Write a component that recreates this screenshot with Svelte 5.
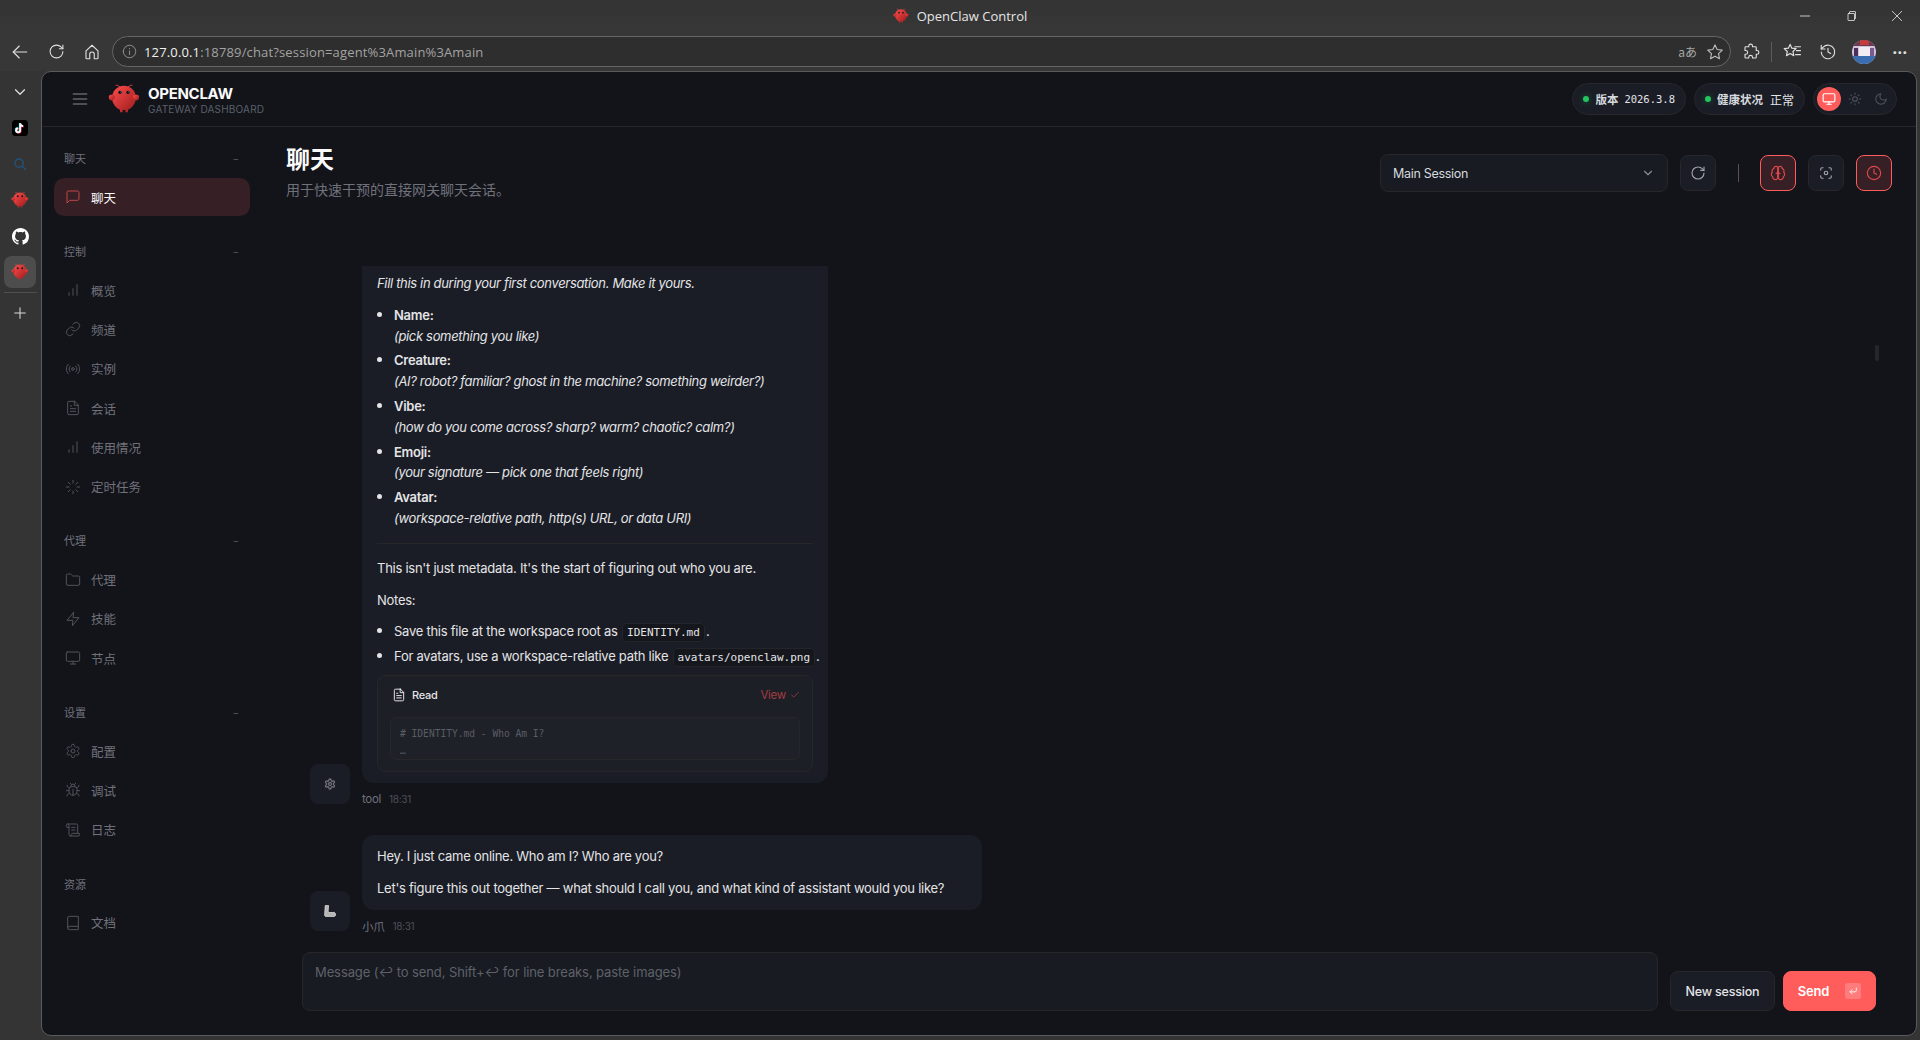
<script>
  const circle = (cx, cy, r) => `M${cx - r} ${cy}a${r} ${r} 0 1 0 ${r * 2} 0a${r} ${r} 0 1 0 ${-r * 2} 0`;

  const icons = {
    message: ['M21 15a2 2 0 0 1-2 2H7l-4 4V5a2 2 0 0 1 2-2h14a2 2 0 0 1 2 2z'],
    bars: ['M12 20V10', 'M18 20V4', 'M6 20v-4'],
    link: ['M10 13a5 5 0 0 0 7.54.54l3-3a5 5 0 0 0-7.07-7.07l-1.72 1.71', 'M14 11a5 5 0 0 0-7.54-.54l-3 3a5 5 0 0 0 7.07 7.07l1.71-1.71'],
    radio: ['M4.9 19.1C1 15.2 1 8.8 4.9 4.9', 'M7.8 16.2c-2.3-2.3-2.3-6.1 0-8.5', circle(12, 12, 2), 'M16.2 7.8c2.3 2.3 2.3 6.1 0 8.5', 'M19.1 4.9C23 8.8 23 15.1 19.1 19'],
    file: ['M14.5 2H6a2 2 0 0 0-2 2v16a2 2 0 0 0 2 2h12a2 2 0 0 0 2-2V7.5L14.5 2z', 'M14 2v6h6', 'M16 13H8', 'M16 17H8', 'M10 9H8'],
    loader: ['M12 2v4', 'M12 18v4', 'M4.93 4.93l2.83 2.83', 'M16.24 16.24l2.83 2.83', 'M2 12h4', 'M18 12h4', 'M4.93 19.07l2.83-2.83', 'M16.24 7.76l2.83-2.83'],
    folder: ['M20 20a2 2 0 0 0 2-2V8a2 2 0 0 0-2-2h-7.9a2 2 0 0 1-1.69-.9L9.6 3.9A2 2 0 0 0 7.93 3H4a2 2 0 0 0-2 2v13a2 2 0 0 0 2 2Z'],
    zap: ['M13 2 3 14h9l-1 8 10-12h-9l1-8z'],
    monitor: ['M4 3h16a2 2 0 0 1 2 2v10a2 2 0 0 1-2 2H4a2 2 0 0 1-2-2V5a2 2 0 0 1 2-2z', 'M8 21h8', 'M12 17v4'],
    settings: ['M12.22 2h-.44a2 2 0 0 0-2 2v.18a2 2 0 0 1-1 1.73l-.43.25a2 2 0 0 1-2 0l-.15-.08a2 2 0 0 0-2.73.73l-.22.38a2 2 0 0 0 .73 2.73l.15.1a2 2 0 0 1 1 1.72v.51a2 2 0 0 1-1 1.74l-.15.09a2 2 0 0 0-.73 2.73l.22.38a2 2 0 0 0 2.73.73l.15-.08a2 2 0 0 1 2 0l.43.25a2 2 0 0 1 1 1.73V20a2 2 0 0 0 2 2h.44a2 2 0 0 0 2-2v-.18a2 2 0 0 1 1-1.73l.43-.25a2 2 0 0 1 2 0l.15.08a2 2 0 0 0 2.73-.73l.22-.39a2 2 0 0 0-.73-2.73l-.15-.08a2 2 0 0 1-1-1.74v-.5a2 2 0 0 1 1-1.74l.15-.09a2 2 0 0 0 .73-2.73l-.22-.38a2 2 0 0 0-2.73-.73l-.15.08a2 2 0 0 1-2 0l-.43-.25a2 2 0 0 1-1-1.73V4a2 2 0 0 0-2-2z', circle(12, 12, 3)],
    bug: ['M8 2l1.88 1.88', 'M14.12 3.88 16 2', 'M9 7.13v-1a3 3 0 1 1 6 0v1', 'M12 20c-3.3 0-6-2.7-6-6v-3a4 4 0 0 1 4-4h4a4 4 0 0 1 4 4v3c0 3.3-2.7 6-6 6', 'M12 20v-9', 'M6.53 9C4.6 8.8 3 7.1 3 5', 'M6 13H2', 'M3 21c0-2.1 1.7-3.9 3.8-4', 'M20.97 5c0 2.1-1.6 3.8-3.5 4', 'M22 13h-4', 'M17.2 17c2.1.1 3.8 1.9 3.8 4'],
    scroll: ['M15 12h-5', 'M15 8h-5', 'M19 17V5a2 2 0 0 0-2-2H4', 'M8 21h12a2 2 0 0 0 2-2v-1a1 1 0 0 0-1-1H11a1 1 0 0 0-1 1v1a2 2 0 1 1-4 0V5a2 2 0 1 0-4 0v2a1 1 0 0 0 1 1h3'],
    book: ['M4 19.5v-15A2.5 2.5 0 0 1 6.5 2H20v20H6.5a2.5 2.5 0 0 1 0-5H20'],
    brain: ['M12 5a3 3 0 1 0-5.997.125 4 4 0 0 0-2.526 5.77 4 4 0 0 0 .556 6.588A4 4 0 1 0 12 18Z', 'M12 5a3 3 0 1 1 5.997.125 4 4 0 0 1 2.526 5.77 4 4 0 0 1-.556 6.588A4 4 0 1 1 12 18Z', 'M12 5v13', 'M15 13a4.5 4.5 0 0 1-3-4 4.5 4.5 0 0 1-3 4'],
    focus: ['M3 7V5a2 2 0 0 1 2-2h2', 'M17 3h2a2 2 0 0 1 2 2v2', 'M21 17v2a2 2 0 0 1-2 2h-2', 'M7 21H5a2 2 0 0 1-2-2v-2', circle(12, 12, 3)],
    clock: [circle(12, 12, 10), 'M12 6v6l4 2'],
    refresh: ['M21 12a9 9 0 1 1-9-9c2.52 0 4.93 1 6.74 2.74L21 8', 'M21 3v5h-5'],
    sun: [circle(12, 12, 4), 'M12 2v2', 'M12 20v2', 'M4.93 4.93l1.41 1.41', 'M17.66 17.66l1.41 1.41', 'M2 12h2', 'M20 12h2', 'M6.34 17.66l-1.41 1.41', 'M19.07 4.93l-1.41 1.41'],
    moon: ['M12 3a6 6 0 0 0 9 9 9 9 0 1 1-9-9Z'],
    chevron: ['M6 9l6 6 6-6'],
    check: ['M20 6 9 17l-5-5'],
    menu: ['M4 6h16', 'M4 12h16', 'M4 18h16'],
    back: ['M21 12H3', 'M11 4l-8 8 8 8'],
    home: ['M4 10.5 12 3l8 7.5V20a1 1 0 0 1-1 1h-4v-6a3 3 0 0 0-6 0v6H5a1 1 0 0 1-1-1z'],
    info: [circle(12, 12, 10), 'M12 11v6', 'M12 7v.5'],
    star: ['M12 2.5l2.9 6.2 6.8.8-5 4.7 1.3 6.8-6-3.4-6 3.4 1.3-6.8-5-4.7 6.8-.8z'],
    puzzle: ['M9 4a2.5 2.5 0 0 1 5 0v1h4a1 1 0 0 1 1 1v4h1a2.5 2.5 0 0 1 0 5h-1v4a1 1 0 0 1-1 1h-4v-1a2.5 2.5 0 0 0-5 0v1H5a1 1 0 0 1-1-1v-4h1a2.5 2.5 0 0 0 0-5H4V6a1 1 0 0 1 1-1h4z'],
    favs: ['M9 3l2.2 4.8 5.3.6-3.9 3.6 1 5.2L9 14.6l-4.6 2.6 1-5.2L1.5 8.4l5.3-.6z', 'M15 6h7', 'M17 11h5', 'M16 16h6'],
    history: ['M3 12a9 9 0 1 0 2.6-6.4L3 8', 'M3 3v5h5', 'M12 7v5l3.5 2'],
    plus: ['M12 4v16', 'M4 12h16'],
    search: [circle(10.5, 10.5, 7), 'M16 16l5.5 5.5'],
    minimize: ['M4 12h16'],
    restore: ['M7 7h11a1 1 0 0 1 1 1v12a1 1 0 0 1-1 1H7a1 1 0 0 1-1-1V8a1 1 0 0 1 1-1z', 'M9 7V4a1 1 0 0 1 1-1h10a1 1 0 0 1 1 1v13h-2'],
    close: ['M4 4l16 16', 'M20 4 4 20'],
    enter: ['M20 5v6a3 3 0 0 1-3 3H5', 'M10 9l-5 5 5 5'],
  };

  const navGroups = [
    { label: '聊天', items: [{ label: '聊天', icon: 'message', active: true }] },
    {
      label: '控制',
      items: [
        { label: '概览', icon: 'bars' },
        { label: '频道', icon: 'link' },
        { label: '实例', icon: 'radio' },
        { label: '会话', icon: 'file' },
        { label: '使用情况', icon: 'bars' },
        { label: '定时任务', icon: 'loader' },
      ],
    },
    {
      label: '代理',
      items: [
        { label: '代理', icon: 'folder' },
        { label: '技能', icon: 'zap' },
        { label: '节点', icon: 'monitor' },
      ],
    },
    {
      label: '设置',
      items: [
        { label: '配置', icon: 'settings' },
        { label: '调试', icon: 'bug' },
        { label: '日志', icon: 'scroll' },
      ],
    },
    { label: '资源', plain: true, items: [{ label: '文档', icon: 'book' }] },
  ];

  const identityFields = [
    { name: 'Name:', hint: '(pick something you like)' },
    { name: 'Creature:', hint: '(AI? robot? familiar? ghost in the machine? something weirder?)' },
    { name: 'Vibe:', hint: '(how do you come across? sharp? warm? chaotic? calm?)' },
    { name: 'Emoji:', hint: '(your signature — pick one that feels right)' },
    { name: 'Avatar:', hint: '(workspace-relative path, http(s) URL, or data URI)' },
  ];
</script>

{#snippet icon(name, size = 16, width = 2)}
  <svg class="icon" viewBox="0 0 24 24" width={size} height={size} fill="none" stroke="currentColor" stroke-width={width} stroke-linecap="round" stroke-linejoin="round">
    {#each icons[name] as d}
      <path {d} />
    {/each}
  </svg>
{/snippet}

{#snippet logo(size)}
  <svg viewBox="0 0 120 120" width={size} height={size} fill="none">
    <defs>
      <linearGradient id="lobster" x1="0" y1="0" x2="1" y2="1">
        <stop offset="0%" stop-color="#ff4d4d" />
        <stop offset="100%" stop-color="#991b1b" />
      </linearGradient>
    </defs>
    <path fill="url(#lobster)" d="M60 10C30 10 15 35 15 55C15 75 30 95 45 100L45 110L55 110L55 100C55 100 60 102 65 100L65 110L75 110L75 100C90 95 105 75 105 55C105 35 90 10 60 10Z" />
    <path fill="url(#lobster)" d="M20 45C5 40 0 50 5 60C10 70 20 65 25 55C28 48 25 45 20 45Z" />
    <path fill="url(#lobster)" d="M100 45C115 40 120 50 115 60C110 70 100 65 95 55C92 48 95 45 100 45Z" />
    <path d="M45 15Q35 5 30 8" stroke="#ff4d4d" stroke-width="3" stroke-linecap="round" />
    <path d="M75 15Q85 5 90 8" stroke="#ff4d4d" stroke-width="3" stroke-linecap="round" />
    <circle cx="45" cy="35" r="6" fill="#050810" />
    <circle cx="75" cy="35" r="6" fill="#050810" />
    <circle cx="46" cy="34" r="2" fill="#00e5cc" />
    <circle cx="76" cy="34" r="2" fill="#00e5cc" />
  </svg>
{/snippet}

<div class="window">
  <div class="titlebar">
    <div class="title">
      {@render logo(16)}
      <span>OpenClaw Control</span>
    </div>
    <div class="window-controls">
      <span>{@render icon('minimize', 14, 1.4)}</span>
      <span>{@render icon('restore', 12, 1.6)}</span>
      <span>{@render icon('close', 14, 1.4)}</span>
    </div>
  </div>

  <div class="toolbar">
    <span class="tool">{@render icon('back', 18, 1.5)}</span>
    <span class="tool">{@render icon('refresh', 17, 1.5)}</span>
    <span class="tool">{@render icon('home', 18, 1.5)}</span>
    <div class="address">
      <span class="address-info">{@render icon('info', 15, 1.4)}</span>
      <span class="url"><b>127.0.0.1</b>:18789/chat?session=agent%3Amain%3Amain</span>
      <span class="translate">aあ</span>
      <span class="address-star">{@render icon('star', 18, 1.5)}</span>
    </div>
    <span class="tool">{@render icon('puzzle', 18, 1.5)}</span>
    <span class="tool-sep"></span>
    <span class="tool">{@render icon('favs', 19, 1.5)}</span>
    <span class="tool">{@render icon('history', 18, 1.5)}</span>
    <span class="tool">
      <svg class="profile" viewBox="0 0 24 24" width="24" height="24">
        <clipPath id="profile-clip"><circle cx="12" cy="12" r="12" /></clipPath>
        <g clip-path="url(#profile-clip)">
          <rect width="24" height="24" fill="#cfc4d8" />
          <rect width="24" height="6" fill="#6d3a52" />
          <rect x="8" width="9" height="5" fill="#c43c3c" />
          <rect x="2" y="8" width="4" height="10" fill="#4a2f5c" />
          <rect x="7" y="7" width="11" height="9" fill="#f0ecf2" />
          <rect x="18" y="8" width="4" height="10" fill="#7a5a90" />
          <rect y="16" width="24" height="8" fill="#3a6db0" />
        </g>
      </svg>
    </span>
    <span class="tool dots">···</span>
  </div>

  <div class="body">
    <div class="rail">
      <span class="rail-item chev">{@render icon('chevron', 18, 1.6)}</span>
      <span class="rail-item">
        <svg class="tiktok" viewBox="0 0 16 16" width="16" height="16">
          <rect width="16" height="16" rx="3.5" fill="#000" />
          <g fill="none" stroke-width="1.7">
            <path d="M8.2 3.4v6.9a2 2 0 1 1-2-2M8.2 3.4c.2 1.5 1.2 2.6 2.9 2.8" stroke="#25f4ee" transform="translate(-.5 -.4)" />
            <path d="M8.2 3.4v6.9a2 2 0 1 1-2-2M8.2 3.4c.2 1.5 1.2 2.6 2.9 2.8" stroke="#fe2c55" transform="translate(.5 .4)" />
            <path d="M8.2 3.4v6.9a2 2 0 1 1-2-2M8.2 3.4c.2 1.5 1.2 2.6 2.9 2.8" stroke="#fff" />
          </g>
        </svg>
      </span>
      <span class="rail-item rail-search">{@render icon('search', 14, 2.4)}</span>
      <span class="rail-item">{@render logo(18)}</span>
      <span class="rail-item">
        <svg viewBox="0 0 16 16" width="17" height="17" fill="#fff">
          <path d="M8 0C3.58 0 0 3.58 0 8c0 3.54 2.29 6.53 5.47 7.59.4.07.55-.17.55-.38 0-.19-.01-.82-.01-1.49-2.01.37-2.53-.49-2.69-.94-.09-.23-.48-.94-.82-1.13-.28-.15-.68-.52-.01-.53.63-.01 1.08.58 1.23.82.72 1.21 1.87.87 2.33.66.07-.52.28-.87.51-1.07-1.78-.2-3.64-.89-3.64-3.95 0-.87.31-1.59.82-2.15-.08-.2-.36-1.02.08-2.12 0 0 .67-.21 2.2.82.64-.18 1.32-.27 2-.27s1.36.09 2 .27c1.53-1.04 2.2-.82 2.2-.82.44 1.1.16 1.92.08 2.12.51.56.82 1.27.82 2.15 0 3.07-1.87 3.75-3.65 3.95.29.25.54.73.54 1.48 0 1.07-.01 1.93-.01 2.2 0 .21.15.46.55.38A8.013 8.013 0 0016 8c0-4.42-3.58-8-8-8z" />
        </svg>
      </span>
      <span class="rail-item rail-active">{@render logo(18)}</span>
      <span class="rail-sep"></span>
      <span class="rail-item rail-plus">{@render icon('plus', 16, 1.6)}</span>
    </div>

    <div class="panel">
      <header class="topbar">
        <div class="brand">
          <span class="hamburger">{@render icon('menu', 20, 1.6)}</span>
          <span class="brand-logo">{@render logo(32)}</span>
          <div class="brand-text">
            <div class="brand-name">OPENCLAW</div>
            <div class="brand-sub">GATEWAY DASHBOARD</div>
          </div>
        </div>
        <div class="status">
          <div class="pill">
            <span class="dot"></span><strong>版本</strong><span class="mono">2026.3.8</span>
          </div>
          <div class="pill">
            <span class="dot"></span><strong>健康状况</strong><span class="pill-value">正常</span>
          </div>
          <div class="theme">
            <span class="theme-btn on">{@render icon('monitor', 14, 2)}</span>
            <span class="theme-btn">{@render icon('sun', 14, 1.8)}</span>
            <span class="theme-btn">{@render icon('moon', 14, 1.8)}</span>
          </div>
        </div>
      </header>

      <div class="content">
        <nav class="sidebar">
          {#each navGroups as group}
            <section class="nav-group">
              <div class="nav-label">
                <span>{group.label}</span>
                {#if !group.plain}<span class="nav-minus">−</span>{/if}
              </div>
              {#each group.items as item}
                <div class="nav-item" class:active={item.active}>
                  {@render icon(item.icon, 16, 1.5)}
                  <span>{item.label}</span>
                </div>
              {/each}
            </section>
          {/each}
        </nav>

        <main class="main">
          <div class="page-head">
            <div>
              <h1>聊天</h1>
              <p class="page-sub">用于快速干预的直接网关聊天会话。</p>
            </div>
            <div class="page-controls">
              <div class="select">
                <span>Main Session</span>
                {@render icon('chevron', 14, 2)}
              </div>
              <span class="ctl">{@render icon('refresh', 16, 1.7)}</span>
              <span class="ctl-sep"></span>
              <span class="ctl ctl-on">{@render icon('brain', 16, 1.7)}</span>
              <span class="ctl">{@render icon('focus', 14, 2)}</span>
              <span class="ctl ctl-on">{@render icon('clock', 16, 1.7)}</span>
            </div>
          </div>

          <div class="thread">
            <span class="scroll-thumb"></span>
            <div class="group first">
              <span class="avatar tool-avatar">{@render icon('settings', 12, 2.6)}</span>
              <div class="group-body">
                <div class="bubble clipped">
                  <p><em>Fill this in during your first conversation. Make it yours.</em></p>
                  <ul class="fields">
                    {#each identityFields as field}
                      <li><strong>{field.name}</strong><br /><em>{field.hint}</em></li>
                    {/each}
                  </ul>
                  <hr />
                  <p>This isn't just metadata. It's the start of figuring out who you are.</p>
                  <p class="notes-title">Notes:</p>
                  <ul class="notes">
                    <li>Save this file at the workspace root as <code>IDENTITY.md</code>.</li>
                    <li>For avatars, use a workspace-relative path like <code>avatars/openclaw.png</code>.</li>
                  </ul>
                  <div class="tool-card">
                    <div class="tool-head">
                      <span class="tool-name">{@render icon('file', 14, 1.7)}<span>Read</span></span>
                      <span class="tool-view">View {@render icon('check', 10, 2)}</span>
                    </div>
                    <div class="tool-preview">
                      <div># IDENTITY.md - Who Am I?</div>
                      <div>…</div>
                    </div>
                  </div>
                </div>
                <div class="meta"><span class="who">tool</span><span class="time">18:31</span></div>
              </div>
            </div>

            <div class="group">
              <span class="avatar bot-avatar">
                <svg viewBox="0 0 16 16" width="16" height="16"><path fill="#b4b4b4" stroke="#e8e8e8" stroke-width=".7" stroke-linejoin="round" d="M3.2 2.6h3.4l-.5 5.6 1 1.4 5.4-.2 1 1.4v1.6l-1 1H3.4l-.8-1z" /></svg>
              </span>
              <div class="group-body">
                <div class="bubble wide">
                  <p>Hey. I just came online. Who am I? Who are you?</p>
                  <p>Let's figure this out together — what should I call you, and what kind of assistant would you like?</p>
                </div>
                <div class="meta"><span class="who">小爪</span><span class="time">18:31</span></div>
              </div>
            </div>
          </div>

          <div class="composer">
            <div class="input">Message (↩ to send, Shift+↩ for line breaks, paste images)</div>
            <button class="btn">New session</button>
            <button class="btn send">Send <kbd>{@render icon('enter', 10, 2)}</kbd></button>
          </div>
        </main>
      </div>
    </div>
  </div>
</div>

<style>
  :global(body) {
    margin: 0;
    background: #333;
    font-family: Inter, "Noto Sans CJK SC", sans-serif;
  }

  .icon {
    display: block;
    flex: none;
  }

  .window {
    display: flex;
    flex-direction: column;
    width: 1920px;
    height: 1040px;
    overflow: hidden;
    background: #343434;
    color: #e4e4e7;
  }

  /* browser chrome */
  .titlebar {
    display: grid;
    grid-template-columns: 1fr auto 1fr;
    align-items: center;
    flex: none;
    height: 32px;
    background: linear-gradient(#333, #373737);
  }

  .title {
    grid-column: 2;
    display: flex;
    align-items: center;
    gap: 8px;
    color: #e6e6e6;
    font: 13px "Open Sans", sans-serif;
  }

  .window-controls {
    grid-column: 3;
    justify-self: end;
    display: flex;
    color: #e8e8e8;
  }

  .window-controls span {
    display: flex;
    align-items: center;
    justify-content: center;
    width: 46px;
  }

  .toolbar {
    display: flex;
    align-items: center;
    flex: none;
    height: 39px;
    padding: 0 2px;
    background: #373737;
    color: #e0e0e0;
  }

  .tool {
    display: flex;
    align-items: center;
    justify-content: center;
    flex: none;
    width: 36px;
  }

  .dots {
    font: bold 16px "Open Sans", sans-serif;
    letter-spacing: 0.5px;
  }

  .tool-sep {
    flex: none;
    width: 1px;
    height: 20px;
    margin: 0 2px;
    background: #5c5c5c;
  }

  .address {
    display: flex;
    align-items: center;
    flex: 1;
    height: 29px;
    margin: 0 2px 0 2px;
    padding: 0 6px 0 9px;
    border: 1px solid #666;
    border-radius: 16px;
    background: #2e2e2e;
    font: 13px "Open Sans", sans-serif;
  }

  .address-info {
    color: #9a9a9a;
    margin-right: 7px;
  }

  .url {
    flex: 1;
    color: #a3a3a3;
    letter-spacing: 0.15px;
  }

  .url b {
    color: #f0f0f0;
    font-weight: 400;
  }

  .translate {
    margin-right: 9px;
    color: #a8a8a8;
    font: 12px "Noto Sans CJK JP", sans-serif;
  }

  .address-star {
    color: #bdbdbd;
  }

  .profile {
    display: block;
  }

  .body {
    display: flex;
    flex: 1;
    min-height: 0;
  }

  .rail {
    display: flex;
    flex-direction: column;
    align-items: center;
    flex: none;
    width: 41px;
    padding: 3px 1px 0 0;
    box-sizing: border-box;
    color: #e0e0e0;
  }

  .rail-item {
    display: flex;
    align-items: center;
    justify-content: center;
    width: 32px;
    height: 36px;
  }

  .chev {
    height: 36px;
  }

  .rail-search {
    color: #23527c;
  }

  .rail-active {
    height: 32px;
    margin-top: 2px;
    border-radius: 8px;
    background: #4d4d4d;
  }

  .rail-sep {
    width: 33px;
    height: 1px;
    margin: 4px 0;
    background: #4f4f4f;
  }

  .rail-plus {
    height: 32px;
    color: #d8d8d8;
  }

  .panel {
    display: flex;
    flex-direction: column;
    flex: 1;
    min-width: 0;
    margin: 0 3px 4px 0;
    border: 1px solid #5a5a5a;
    border-radius: 10px;
    overflow: hidden;
    background: #12141a;
  }

  /* app header */
  .topbar {
    display: flex;
    align-items: center;
    justify-content: space-between;
    flex: none;
    height: 55px;
    padding: 0 19px 0 28px;
    border-bottom: 1px solid #27272a;
    box-sizing: border-box;
  }

  .brand {
    display: flex;
    align-items: center;
  }

  .hamburger {
    color: #5f636b;
    margin-right: 18px;
  }

  .brand-logo {
    display: block;
    height: 32px;
    margin-right: 8px;
  }

  .brand-text {
    padding-top: 3px;
  }

  .brand-name {
    color: #fafafa;
    font-size: 15px;
    font-weight: 700;
    line-height: 17px;
    letter-spacing: -0.3px;
  }

  .brand-sub {
    color: #5b606a;
    font-size: 10px;
    line-height: 14px;
    letter-spacing: 0.2px;
  }

  .status {
    display: flex;
    align-items: center;
    gap: 8px;
  }

  .pill {
    display: flex;
    align-items: center;
    height: 32px;
    padding: 0 10px;
    box-sizing: border-box;
    border: 1px solid #27272a;
    border-radius: 16px;
    background: #1a1d25;
    font-size: 11.5px;
  }

  .pill strong {
    font-weight: 600;
    color: #d6d9de;
  }

  .dot {
    width: 6px;
    height: 6px;
    margin-right: 6px;
    border-radius: 50%;
    background: #22c55e;
    box-shadow: 0 0 6px rgba(34, 197, 94, 0.4);
  }

  .mono {
    margin-left: 6px;
    font: 10.5px "DejaVu Sans Mono", monospace;
  }

  .pill-value {
    margin-left: 7px;
    color: #e4e4e7;
    font-size: 12px;
  }

  .theme {
    display: flex;
    gap: 2px;
    padding: 3px;
    border: 1px solid #27272a;
    border-radius: 16px;
    background: #1a1d25;
    color: #52525b;
  }

  .theme-btn {
    display: flex;
    align-items: center;
    justify-content: center;
    width: 24px;
    height: 24px;
    border-radius: 50%;
  }

  .theme-btn.on {
    background: #ff5c5c;
    color: #fff;
  }

  .content {
    display: flex;
    flex: 1;
    min-height: 0;
  }

  /* sidebar */
  .sidebar {
    flex: none;
    width: 220px;
    padding: 21px 12px 0;
    box-sizing: border-box;
  }

  .nav-group {
    margin-bottom: 24.7px;
  }

  .nav-label {
    display: flex;
    align-items: center;
    justify-content: space-between;
    height: 20px;
    margin-bottom: 10px;
    padding: 0 11px 0 10px;
    color: #71717a;
    font-size: 11px;
  }

  .nav-minus {
    color: #52525b;
    font-size: 10px;
  }

  .nav-item {
    display: flex;
    align-items: center;
    gap: 10px;
    height: 38.3px;
    margin-bottom: 1px;
    padding-left: 11px;
    border-radius: 10px;
    color: #52525b;
    font-size: 12.5px;
  }

  .nav-item span {
    color: #71717a;
  }

  .nav-item:last-child {
    margin-bottom: 0;
  }

  .nav-item.active {
    background: #361f25;
    color: #c0484c;
  }

  .nav-item.active span {
    color: #fafafa;
  }

  /* main column */
  .main {
    display: flex;
    flex-direction: column;
    flex: 1;
    min-width: 0;
  }

  .page-head {
    display: flex;
    justify-content: space-between;
    flex: none;
    height: 139px;
    padding: 17px 24px 0;
    box-sizing: border-box;
  }

  h1 {
    margin: 0;
    color: #fafafa;
    font-size: 24px;
    font-weight: 700;
    line-height: 32px;
  }

  .page-sub {
    margin: 4px 0 0;
    color: #71717a;
    font-size: 14px;
    line-height: 20px;
  }

  .page-controls {
    display: flex;
    align-items: center;
    height: 38px;
    margin-top: 10px;
  }

  .select {
    display: flex;
    align-items: center;
    justify-content: space-between;
    width: 288px;
    height: 38px;
    margin-right: 12px;
    padding: 0 12px;
    box-sizing: border-box;
    border: 1px solid #27272a;
    border-radius: 8px;
    background: #181b22;
    color: #d6d9de;
    font-size: 12.5px;
    letter-spacing: -0.3px;
  }

  .select :global(svg) {
    color: #8a8d93;
  }

  .ctl {
    display: flex;
    align-items: center;
    justify-content: center;
    width: 36px;
    height: 36px;
    box-sizing: border-box;
    border: 1px solid #27272a;
    border-radius: 8px;
    background: #1a1d25;
    color: #a1a1aa;
    margin-left: 12px;
  }

  .select + .ctl {
    margin-left: 0;
  }

  .ctl-sep {
    width: 1px;
    height: 18px;
    margin: 0 9px 0 22px;
    background: #5f4f4f;
  }

  .ctl-on {
    border-color: #ff5c5c;
    background: #361f25;
    color: #e0484c;
  }

  /* thread */
  .thread {
    position: relative;
    flex: 1;
    min-height: 0;
    padding-left: 48px;
    overflow: hidden;
  }

  .scroll-thumb {
    position: absolute;
    top: 79px;
    right: 37px;
    width: 4px;
    height: 16px;
    border-radius: 2px;
    background: #24262c;
  }

  .group {
    display: flex;
    align-items: flex-end;
    gap: 12px;
  }

  .group.first {
    margin-bottom: 31px;
  }

  .avatar {
    display: flex;
    align-items: center;
    justify-content: center;
    flex: none;
    width: 40px;
    height: 40px;
    border-radius: 8px;
    background: #1a1d25;
  }

  .tool-avatar {
    color: #71717a;
  }

  .group-body {
    display: flex;
    flex-direction: column;
  }

  .bubble {
    padding: 11px 15px;
    border-radius: 12px;
    background: #1a1d25;
    color: #e4e4e7;
    font-size: 13px;
    line-height: 20.8px;
    letter-spacing: -0.26px;
  }

  .bubble em {
    letter-spacing: -0.33px;
  }

  .bubble.wide {
    width: 620px;
    box-sizing: border-box;
  }

  .bubble.clipped {
    width: 466px;
    box-sizing: border-box;
    padding: 7px 15px 11px;
    border-radius: 0 0 12px 12px;
  }

  .bubble p {
    margin: 0 0 11px;
  }

  .bubble p:last-child {
    margin-bottom: 0;
  }

  .bubble p.notes-title {
    margin-bottom: 11px;
  }

  ul {
    margin: 0;
    padding-left: 17px;
  }

  li::marker {
    font-size: 15px;
  }

  .fields li {
    margin-bottom: 4px;
  }

  .notes {
    margin-bottom: 8px;
    white-space: nowrap;
  }

  .notes li {
    margin-bottom: 4px;
  }

  .bubble strong {
    font-weight: 600;
  }

  hr {
    height: 1px;
    margin: 14px 0 14px;
    border: 0;
    background: #27272a;
  }

  code {
    margin: 0 1px;
    padding: 2px 4px;
    border: 1px solid #22252c;
    border-radius: 4px;
    background: #15171d;
    font: 11px "DejaVu Sans Mono", monospace;
    letter-spacing: 0;
  }

  .tool-card {
    height: 97px;
    padding: 9px 12px 0;
    box-sizing: border-box;
    border: 1px solid #27272a;
    border-radius: 8px;
    background: #1c1f26;
  }

  .tool-head {
    display: flex;
    align-items: center;
    justify-content: space-between;
    height: 20px;
    margin-bottom: 12px;
    font-size: 11px;
  }

  .tool-name {
    display: flex;
    align-items: center;
    gap: 6px;
    padding-left: 2px;
    font-weight: 500;
  }

  .tool-view {
    display: flex;
    align-items: center;
    gap: 4px;
    color: #a33c42;
    font-size: 11.5px;
  }

  .tool-preview {
    height: 43px;
    padding: 7px 9px;
    box-sizing: border-box;
    border: 1px solid #27272a;
    border-radius: 6px;
    background: #1e2128;
    color: #5a5d65;
    font: 9.6px/17px "DejaVu Sans Mono", monospace;
    letter-spacing: 0;
  }

  .meta {
    display: flex;
    align-items: center;
    gap: 8px;
    height: 21px;
    padding-top: 11px;
    box-sizing: border-box;
    font-size: 11.5px;
    letter-spacing: -0.3px;
  }

  .who {
    color: #71717a;
  }

  .time {
    color: #4f4f57;
    font-size: 10px;
  }

  /* composer */
  .composer {
    display: flex;
    align-items: flex-end;
    flex: none;
    gap: 8px;
    padding: 0 40px 24px;
  }

  .input {
    flex: 1;
    height: 59px;
    margin-right: 4px;
    padding: 9px 12px;
    box-sizing: border-box;
    border: 1px solid #27272a;
    border-radius: 8px;
    background: #181b22;
    color: #5f6169;
    font-size: 13px;
    line-height: 20px;
    letter-spacing: -0.1px;
  }

  .btn {
    display: flex;
    align-items: center;
    justify-content: center;
    width: 105px;
    height: 40px;
    padding: 0;
    box-sizing: border-box;
    border: 1px solid #27272a;
    border-radius: 8px;
    background: #1a1d25;
    color: #e4e4e7;
    font: 500 12.5px Inter, sans-serif;
    letter-spacing: -0.2px;
  }

  .send {
    width: 93px;
    border-color: #ff5c5c;
    background: #ff5c5c;
    color: #fff;
    font-size: 13px;
    font-weight: 600;
    gap: 16px;
  }

  kbd {
    display: flex;
    align-items: center;
    justify-content: center;
    width: 16px;
    height: 16px;
    border-radius: 3px;
    background: rgba(255, 255, 255, 0.2);
  }
</style>
